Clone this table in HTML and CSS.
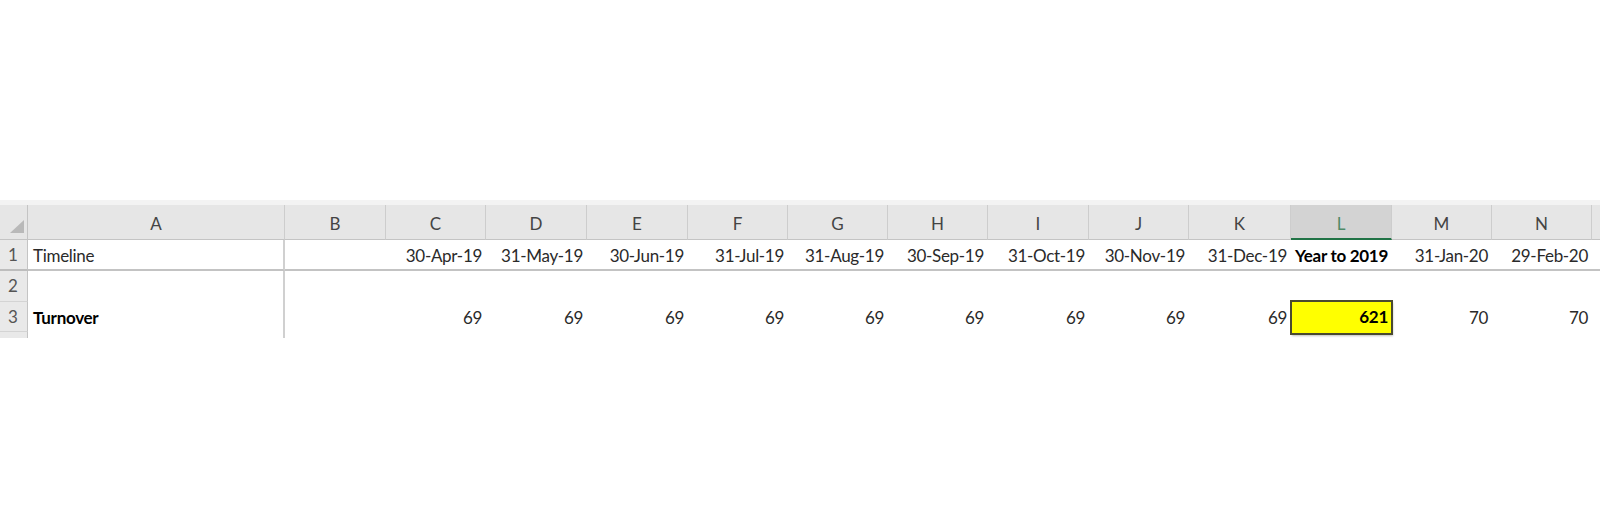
FILE: index.html
```html
<!DOCTYPE html>
<html lang="en">
<head>
    <meta charset="UTF-8">
    <title>Timeline</title>
    <link rel="stylesheet" href="styles.css">
</head>
<body>

    <div class="sheet">
        <!-- column headers -->
        <div class="corner">
            <svg width="14" height="13" viewBox="0 0 14 13"><polygon points="14,0 14,13 0,13" fill="#b9b9b9"/></svg>
        </div>
        <div class="col">A</div>
        <div class="col">B</div>
        <div class="col">C</div>
        <div class="col">D</div>
        <div class="col">E</div>
        <div class="col">F</div>
        <div class="col">G</div>
        <div class="col">H</div>
        <div class="col">I</div>
        <div class="col">J</div>
        <div class="col">K</div>
        <div class="col selected">L</div>
        <div class="col">M</div>
        <div class="col">N</div>
        <div class="col last"></div>

        <!-- row 1 -->
        <div class="num line">1</div>
        <div class="cell first line">Timeline</div>
        <div class="cell line"></div>
        <div class="cell line">30-Apr-19</div>
        <div class="cell line">31-May-19</div>
        <div class="cell line">30-Jun-19</div>
        <div class="cell line">31-Jul-19</div>
        <div class="cell line">31-Aug-19</div>
        <div class="cell line">30-Sep-19</div>
        <div class="cell line">31-Oct-19</div>
        <div class="cell line">30-Nov-19</div>
        <div class="cell line">31-Dec-19</div>
        <div class="cell line bold center">Year to 2019</div>
        <div class="cell line">31-Jan-20</div>
        <div class="cell line">29-Feb-20</div>
        <div class="cell line"></div>

        <!-- row 2 -->
        <div class="num">2</div>
        <div class="cell first"></div>
        <div class="cell empty-row"></div>

        <!-- row 3 -->
        <div class="num">3</div>
        <div class="cell first bold">Turnover</div>
        <div class="cell"></div>
        <div class="cell">69</div>
        <div class="cell">69</div>
        <div class="cell">69</div>
        <div class="cell">69</div>
        <div class="cell">69</div>
        <div class="cell">69</div>
        <div class="cell">69</div>
        <div class="cell">69</div>
        <div class="cell">69</div>
        <div class="cell bold total">621</div>
        <div class="cell">70</div>
        <div class="cell">70</div>
        <div class="cell"></div>

        <!-- row 4, cut off -->
        <div class="num stub"></div>
        <div class="cell first stub"></div>
    </div>

</body>
</html>
```

FILE: styles.css
```css
body {
    margin: 0;
    background-color: #ffffff;
    font-family: Lato, "Open Sans", sans-serif;
}

/* Grid */
.sheet {
    display: grid;
    grid-template-columns: 28px 257px 101px 100px 101px 101px 100px 100px 100px 101px 100px 102px 101px 100px 100px 8px;
    grid-template-rows: 35px 31px 31px 30px 6px;
    margin-top: 200px;
    border-top: 5px solid #f3f3f3;
}

/* Column headers */
.corner {
    background-color: #e6e6e6;
    border-right: 1px solid #c4c4c4;
    border-bottom: 1px solid #c4c4c4;
    display: flex;
    align-items: flex-end;
    justify-content: flex-end;
    padding: 0 3px 6px 0;
}

.col {
    background-color: #e6e6e6;
    border-right: 1px solid #cdcdcd;
    border-bottom: 1px solid #c4c4c4;
    color: #444444;
    font-size: 17px;
    text-align: center;
    padding-top: 4px;
    line-height: 30px;
}

.col.selected {
    background-color: #d3d3d3;
    color: #4f8a67;
    border-bottom: 2px solid #217346;
}

.col.last {
    border-right: none;
}

/* Row numbers */
.num {
    background-color: #e9e9e9;
    border-right: 1px solid #c4c4c4;
    border-bottom: 1px solid #d4d4d4;
    color: #555555;
    font-size: 17px;
    padding-left: 8px;
    line-height: 30px;
}

.num.line {
    border-bottom: 2px solid #bdbdbd;
}

.num.stub {
    border-bottom: none;
}

/* Cells */
.cell {
    color: #2a2a2a;
    font-size: 17px;
    letter-spacing: -0.3px;
    text-align: right;
    padding-right: 4px;
    line-height: 31px;
    white-space: nowrap;
}

.cell.line {
    border-bottom: 2px solid #c3c3c3;
    line-height: 32px;
}

.cell.first {
    text-align: left;
    padding-left: 5px;
    border-right: 2px solid #d0d0d0;
}

.cell.empty-row {
    grid-column: span 14;
}

.cell.bold {
    font-weight: bold;
    color: #000000;
}

.cell.center {
    text-align: center;
    padding-right: 0;
}

.cell.total {
    background-color: #ffff00;
    outline: 2px solid #4a4a30;
    outline-offset: -1px;
    box-shadow: 1px 2px 2px rgba(0, 0, 0, 0.25);
    margin-top: -1px;
    margin-bottom: -2px;
}
```
